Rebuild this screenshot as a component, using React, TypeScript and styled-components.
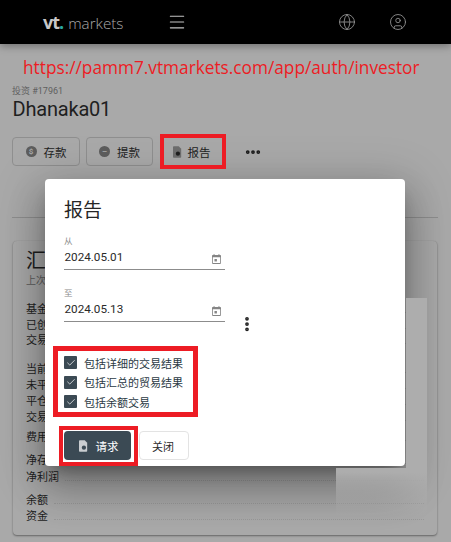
import React from "react";
import styled, { createGlobalStyle } from "styled-components";
import { Menu, Globe, CircleUser, Check, MoreHorizontal, MoreVertical } from "lucide-react";

const Global = createGlobalStyle`
  html, body { margin: 0; padding: 0; background: #a9a9a9; }
  body { font-family: Roboto, "Noto Sans CJK SC", sans-serif; }
  * { box-sizing: border-box; }
`;
const Page = styled.div`
  position: relative; width: 451px; height: 542px; overflow: hidden; background: #a9a9a9; color: #1c1c1c;
`;
const Header = styled.header`
  position: relative; z-index: 3; height: 44px; background: #000; display: flex; align-items: center; padding-left: 43px;
  box-shadow: 0 2px 8px rgba(0,0,0,.35); color: #8f8f8f;
`;
const Logo = styled.div`
  width: 124px; display: flex; align-items: baseline; font-size: 15.2px; font-weight: 300; color: #a9a9a9; font-family: "Open Sans", sans-serif;
`;
const LogoMark = styled.span`
  font-weight: 700; font-size: 18px; color: #c8c8c8; margin-right: 5px; letter-spacing: -1px;
  & i { font-style: normal; color: #2aa9a2; }
`;
const HeaderRight = styled.div`
  margin-left: auto; display: flex; gap: 33px; padding-right: 44px;
`;
const Url = styled.div`
  color: #ed1c24; font-family: "Open Sans", sans-serif; font-size: 17.25px; line-height: 24px; padding: 12px 0 0 23px; white-space: nowrap;
`;
const Account = styled.div`
  padding: 5px 0 0 12px; font-size: 9px; line-height: 12px; color: #5f5f5f;
`;
const Name = styled.h1`
  margin: 0; padding: 0 0 0 12.5px; font-size: 20px; line-height: 25px; font-weight: 400; color: #1f1f1f; letter-spacing: -.2px;
`;
const Actions = styled.div`
  display: flex; gap: 6px; align-items: center; padding: 15px 0 0 12px;
`;
const ActionButton = styled.button`
  height: 29px; padding: 0 ${p => (p.$plain ? 3 : 0)}px 0 0; border: 1px solid #8f8f8f; border-radius: 4px; background: transparent; display: flex; align-items: center; justify-content: center; gap: ${p => (p.$plain ? 6 : 7)}px;
  width: ${p => p.$w}px; font: 400 11.5px Roboto, "Noto Sans CJK SC", sans-serif; color: #1e1e1e;
  ${p => p.$plain && "border-color: transparent; margin-left: 1px;"}
`;
const RoundIcon = styled.span`
  width: 11px; height: 11px; border-radius: 50%; background: #5d5d5d; color: #a9a9a9; font-size: 8px; line-height: 11px; text-align: center; font-weight: 700;
`;
const DocIcon = styled.svg`width: 9px; height: 12px;`;
const Dots = styled.span`margin-left: 12px; display: flex; color: #1a1a1a;`;
const Divider = styled.div`height: 1px; background: #8e8e8e; margin: 51px 13px 0 12px;`;
const Card = styled.section`
  margin: 23px 14px 0 13px; height: 294px; padding: 7px 13px; background: #a9a9a9; border-radius: 4px;
  box-shadow: 0 1px 2px rgba(0,0,0,.4), 0 0 1px rgba(0,0,0,.15);
`;
const CardTitle = styled.h2`margin: 0; font-size: 20px; line-height: 26px; font-weight: 400; color: #1d1d1d;`;
const CardSub = styled.div`font-size: 10px; line-height: 14px; color: #5c5c5c; margin-bottom: 14px;`;
const Group = styled.div`margin-bottom: ${p => p.$gap}px;`;
const Row = styled.div`
  height: ${p => p.$h}px; line-height: ${p => p.$h}px; font-size: 11px; color: #1e1e1e; display: flex; align-items: baseline; gap: 6px; white-space: nowrap;
  &::after { content: ""; flex: 1; border-bottom: 1px dotted #989898; }
`;
const Patch = styled.div`
  position: absolute; z-index: 2; left: 336px; top: 298px; width: 91px; height: 218px;
  background: linear-gradient(#adadad 80%, rgba(173,173,173,0));
  clip-path: polygon(70px 0, 91px 0, 91px 218px, 0 218px, 0 170px, 70px 170px);
`;
const Modal = styled.div`
  position: absolute; z-index: 1; left: 45px; top: 179px; width: 360px; height: 287px; background: #fff; border-radius: 4px; padding: 19px 19px 0;
  box-shadow: 0 11px 15px -7px rgba(0,0,0,.32), 0 24px 38px 3px rgba(0,0,0,.2), 0 9px 46px 8px rgba(0,0,0,.18);
`;
const ModalTitle = styled.h2`margin: 0 0 11px; font-size: 19px; line-height: 26px; font-weight: 400; color: #262626;`;
const FieldRow = styled.div`position: relative;`;
const Field = styled.div`width: 161px; margin-bottom: ${p => p.$mb}px;`;
const FieldLabel = styled.div`font-size: 8.5px; line-height: 12px; color: #8a8a8a;`;
const FieldInput = styled.div`
  height: 23px; display: flex; align-items: center; justify-content: space-between; padding: 0 4px 2px 0.5px; border-bottom: 1px solid #8c8c8c; font-size: 11.7px; color: #2a2a2a;
`;
const CalIcon = styled.svg`width: 9px; height: 10px; margin-top: 3px;`;
const More = styled.span`position: absolute; left: 174px; top: 28px; display: flex; color: #222;`;
const Checks = styled.div`margin-top: 34px; display: flex; flex-direction: column; gap: 6.5px;`;
const CheckRow = styled.div`display: flex; align-items: center; gap: 7px; height: 13px; font-size: 11px; color: #2b3a44;`;
const Box = styled.span`
  width: 13px; height: 13px; background: #3b4a54; border-radius: 1px; display: flex; align-items: center; justify-content: center; color: #e4e7e9;
`;
const Buttons = styled.div`display: flex; gap: 8px; margin-top: 23px;`;
const Primary = styled.button`
  width: 67px; height: 29px; padding: 0 0 0 2px; border: 0; border-radius: 4px; background: #3b4a54; color: #fff; font: 400 11.5px Roboto, "Noto Sans CJK SC", sans-serif; display: flex; align-items: center; justify-content: center; gap: 8px;
`;
const Secondary = styled.button`
  width: 50px; height: 29px; padding: 0 2px 0 0; border: 1px solid #e3e3e3; border-radius: 4px; background: #fff; color: #2b2b2b; font: 400 11px Roboto, "Noto Sans CJK SC", sans-serif;
`;
const Annotation = styled.div`
  position: absolute; z-index: 4; left: ${p => p.$x}px; top: ${p => p.$y}px; width: ${p => p.$w}px; height: ${p => p.$h}px; border: ${p => p.$t}px solid #ed1c24; pointer-events: none;
`;

const Doc = ({ fill, accent }: { fill: string; accent: string }) => (
  <DocIcon viewBox="0 0 11 14">
    <path d="M1 0h6l3 3v10a1 1 0 0 1-1 1H1a1 1 0 0 1-1-1V1a1 1 0 0 1 1-1z" fill={fill} />
    <circle cx="6" cy="9" r="2.6" fill={accent} />
  </DocIcon>
);
const Cal = () => (
  <CalIcon viewBox="0 0 11 12">
    <path d="M2 0h1v1h5V0h1v1h1a1 1 0 0 1 1 1v9a1 1 0 0 1-1 1H1a1 1 0 0 1-1-1V2a1 1 0 0 1 1-1h1zM1 4v7h9V4z" fill="#858585" />
    <rect x="3" y="6" width="3" height="3" fill="#858585" />
  </CalIcon>
);

const groups = [
  { gap: 13, h: 15.5, rows: ["基金经理", "已创建", "交易账户"] },
  { gap: 3, h: 16.3, rows: ["当前余额", "未平仓", "平仓盈亏", "交易量"] },
  { gap: 6, h: 16, rows: ["费用总计"] },
  { gap: 7, h: 17, rows: ["净存款", "净利润"] },
  { gap: 0, h: 16, rows: ["余额", "资金"] },
];
const checks = ["包括详细的交易结果", "包括汇总的贸易结果", "包括余额交易"];

export default function App() {
  return (
    <Page>
      <Global />
      <Header>
        <Logo><LogoMark>vt<i>.</i></LogoMark>markets</Logo>
        <Menu size={20} strokeWidth={1.3} color="#c4c4c4" />
        <HeaderRight>
          <Globe size={18} strokeWidth={1.2} />
          <CircleUser size={18} strokeWidth={1.2} />
        </HeaderRight>
      </Header>
      <Url>https://pamm7.vtmarkets.com/app/auth/investor</Url>
      <Account>投资 #17961</Account>
      <Name>Dhanaka01</Name>
      <Actions>
        <ActionButton $w={68}><RoundIcon>$</RoundIcon>存款</ActionButton>
        <ActionButton $w={67}><RoundIcon>–</RoundIcon>提款</ActionButton>
        <ActionButton $w={66} $plain><Doc fill="#6e6e6e" accent="#1f1f1f" />报告</ActionButton>
        <Dots><MoreHorizontal size={18} strokeWidth={3} /></Dots>
      </Actions>
      <Divider />
      <Card>
        <CardTitle>汇总</CardTitle>
        <CardSub>上次更新</CardSub>
        {groups.map((g, i) => (
          <Group key={i} $gap={g.gap}>
            {g.rows.map(r => <Row key={r} $h={g.h}>{r}</Row>)}
          </Group>
        ))}
      </Card>
      <Patch />
      <Modal>
        <ModalTitle>报告</ModalTitle>
        <Field $mb={17}>
          <FieldLabel>从</FieldLabel>
          <FieldInput>2024.05.01<Cal /></FieldInput>
        </Field>
        <FieldRow>
          <Field $mb={0}>
            <FieldLabel>至</FieldLabel>
            <FieldInput>2024.05.13<Cal /></FieldInput>
          </Field>
          <More><MoreVertical size={18} strokeWidth={3} /></More>
        </FieldRow>
        <Checks>
          {checks.map(c => (
            <CheckRow key={c}><Box><Check size={10} strokeWidth={2} /></Box>{c}</CheckRow>
          ))}
        </Checks>
        <Buttons>
          <Primary><Doc fill="#c9cdd0" accent="#3b4a54" />请求</Primary>
          <Secondary>关闭</Secondary>
        </Buttons>
      </Modal>
      <Annotation $x={160} $y={134} $w={66} $h={35} $t={4} />
      <Annotation $x={53} $y={346} $w={145} $h={71} $t={5} />
      <Annotation $x={59} $y={426} $w={79} $h={40} $t={4} />
    </Page>
  );
}
